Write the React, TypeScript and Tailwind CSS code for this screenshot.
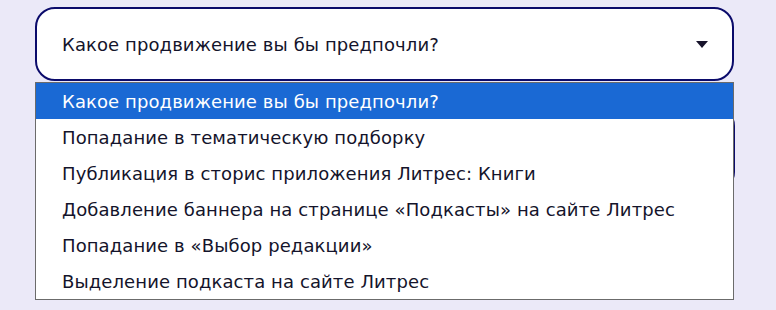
import { useState } from "react";

const options = [
  "Какое продвижение вы бы предпочли?",
  "Попадание в тематическую подборку",
  "Публикация в сторис приложения Литрес: Книги",
  "Добавление баннера на странице «Подкасты» на сайте Литрес",
  "Попадание в «Выбор редакции»",
  "Выделение подкаста на сайте Литрес",
];

export default function App() {
  const [active] = useState(0);

  return (
    <div
      className="w-[776px] h-[310px] bg-[#ebe9f8] overflow-hidden"
      style={{ fontFamily: '"DejaVu Sans", "Noto Sans", sans-serif' }}
    >
      <div className="relative pt-[7px] pl-[35px] w-[734px]">
        <div className="h-[74px] bg-white border-2 border-[#0b0b6b] rounded-[20px] flex items-center justify-between pl-[25px] pr-[22px]">
          <span className="text-[18px] text-[#14142b] tracking-[0.1px]">{options[0]}</span>
          <svg width="12" height="7" viewBox="0 0 12 7" className="mr-[2px]">
            <path d="M0 0h12L6 7z" fill="#17132b" />
          </svg>
        </div>

        {/* next field, mostly hidden by the open list */}
        <div className="mt-[25px] mr-[-1px] h-[86px] bg-white border-2 border-[#0b0b6b] rounded-[20px]" />

        <ul className="absolute left-[35px] top-[82px] w-[699px] bg-white border border-[#6b6b6b]">
          {options.map((opt, i) => (
            <li
              key={opt}
              className={`h-[36px] flex items-center pl-[26px] text-[18px] tracking-[0.1px] ${
                i === active ? "bg-[#1a69d4] text-white" : "text-[#14142b]"
              }`}
            >
              {opt}
            </li>
          ))}
        </ul>
      </div>
    </div>
  );
}
